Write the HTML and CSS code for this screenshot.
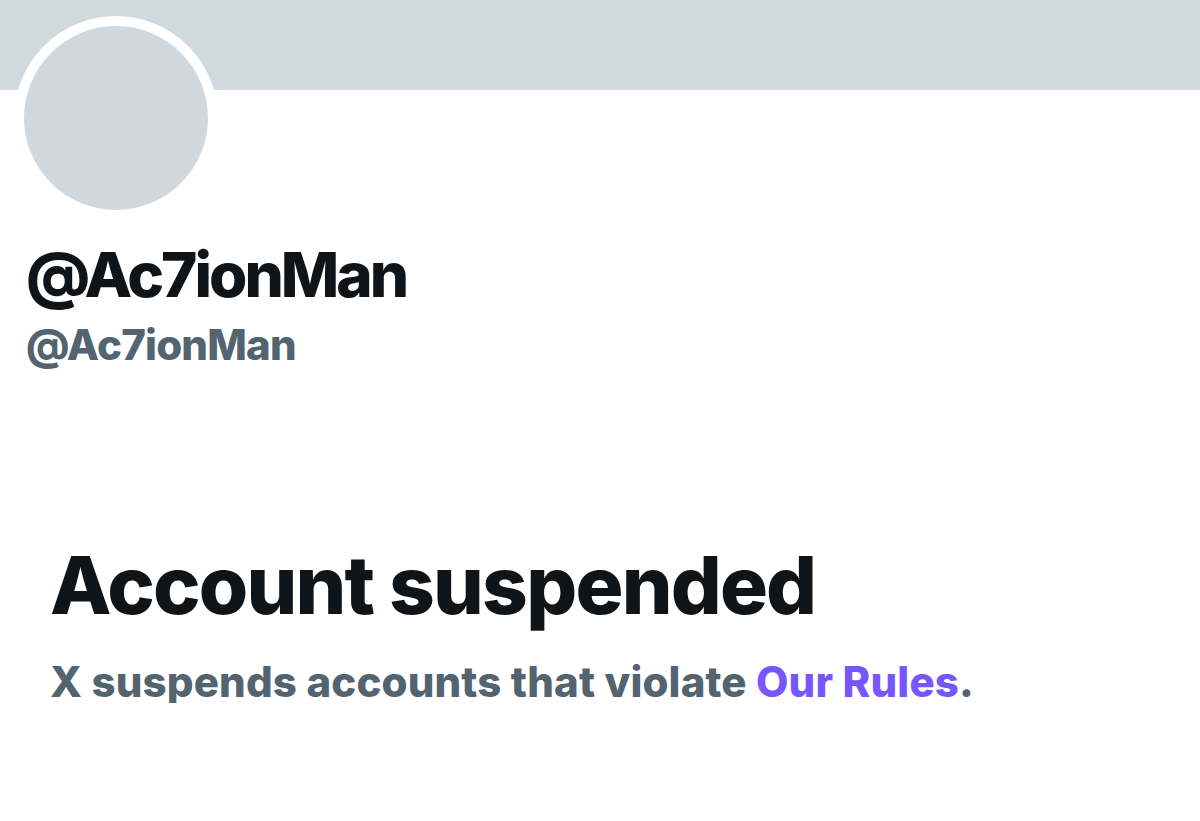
FILE: index.html
```html
<!DOCTYPE html>
<html>
<head>
<meta charset="utf-8">
<link rel="stylesheet" href="styles.css">
</head>
<body>
<div class="banner"></div>
<div class="profile">
  <div class="avatar"></div>
  <div class="name">@Ac7ionMan</div>
  <div class="handle">@Ac7ionMan</div>
</div>
<div class="notice">
  <div class="title">Account suspended</div>
  <div class="desc">X suspends accounts that violate <a class="link" href="#">Our Rules</a>.</div>
</div>
</body>
</html>
```
FILE: styles.css
```css
html, body {
  margin: 0;
  padding: 0;
  background: #ffffff;
  font-family: Inter, "Liberation Sans", Arial, sans-serif;
  font-weight: 800;
}
.banner {
  height: 90px;
  background: #cfd9de;
}
.profile {
  padding-left: 14px;
}
.avatar {
  width: 204px;
  height: 204px;
  box-sizing: border-box;
  border: 10px solid #ffffff;
  border-radius: 50%;
  background: #d0d8dd;
  margin-top: -74px;
}
.name {
  margin-top: 24px;
  padding-left: 12px;
  font-size: 62px;
  line-height: 62px;
  letter-spacing: -3px;
  color: #0f1419;
}
.handle {
  margin-top: 18px;
  padding-left: 12px;
  font-size: 42px;
  line-height: 42px;
  letter-spacing: -0.8px;
  color: #536471;
}
.notice {
  padding-left: 50px;
  margin-top: 179px;
}
.title {
  font-size: 80px;
  line-height: 80px;
  letter-spacing: -1.8px;
  color: #0f1419;
}
.desc {
  margin-top: 36px;
  font-size: 42px;
  line-height: 42px;
  letter-spacing: 0.15px;
  color: #536471;
}
.link {
  color: #7856ff;
  text-decoration: none;
}
```
